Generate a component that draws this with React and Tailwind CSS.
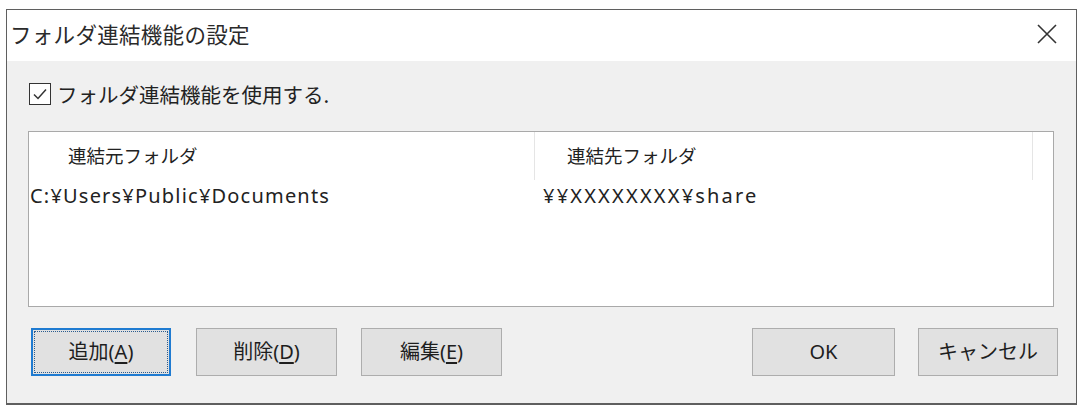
import React from "react";

const jp = { fontFamily: '"Noto Sans CJK JP", "Noto Sans", sans-serif' };
const mixed = { fontFamily: '"Noto Sans", "Noto Sans CJK JP", sans-serif' };

function Button({ label, mnemonic, focused, width }) {
  return (
    <div
      className={
        "relative flex h-[48px] items-center justify-center bg-[#e1e1e1] text-[20px] text-[#1e1e1e] " +
        (focused ? "border-2 border-[#1f7bd1]" : "border border-[#adadad]")
      }
      style={{ width, ...mixed }}
    >
      {focused && (
        <div className="pointer-events-none absolute inset-[1px] border border-dotted border-[#2a5c8f]" />
      )}
      <span>
        {label}(<span className="underline underline-offset-[3px]">{mnemonic}</span>)
      </span>
    </div>
  );
}

function PlainButton({ children, width }) {
  return (
    <div
      className="flex h-[48px] items-center justify-center border border-[#adadad] bg-[#e1e1e1] text-[20px] text-[#1e1e1e]"
      style={{ width, ...mixed }}
    >
      {children}
    </div>
  );
}

export default function App() {
  return (
    <div className="h-[407px] w-[1079px] bg-white pl-[6px] pt-[9px]" style={jp}>
      <div className="flex h-[396px] w-[1071px] flex-col border border-b-2 border-[#5f5f5f]">
        {/* title bar */}
        <div className="flex h-[51px] items-center justify-between bg-white pl-[3px] pr-[19px]">
          <span className="-mt-[3px] text-[21.5px] tracking-[0.3px] text-[#2a2a2a]">フォルダ連結機能の設定</span>
          <svg width="20" height="20" viewBox="0 0 20 20" className="-mt-[3px] text-[#333]">
            <path d="M1 1 L19 19 M19 1 L1 19" stroke="currentColor" strokeWidth="1.6" fill="none" />
          </svg>
        </div>

        {/* body */}
        <div className="flex flex-1 flex-col bg-[#f0f0f0]">
          <div className="ml-[22px] mt-[22px] flex h-[22px] items-center">
            <div className="flex h-[22px] w-[22px] items-center justify-center border border-[#333] bg-white">
              <svg width="16" height="14" viewBox="0 0 16 14">
                <path d="M2 7.5 L6 11.5 L14 2.5" stroke="#333" strokeWidth="1.5" fill="none" />
              </svg>
            </div>
            <span className="ml-[6px] text-[20.5px] text-[#222]">フォルダ連結機能を使用する.</span>
          </div>

          {/* list view */}
          <div className="ml-[21px] mt-[26px] h-[176px] w-[1026px] border border-[#a9a9a9] bg-white">
            <div className="flex h-[48px] items-center text-[18.5px] text-[#222]">
              <div className="flex h-full w-[506px] items-center border-r border-[#e5e5e5] pl-[39px]">
                連結元フォルダ
              </div>
              <div className="flex h-full w-[498px] items-center border-r border-[#e5e5e5] pl-[32px]">
                連結先フォルダ
              </div>
            </div>
            <div className="flex h-[32px] items-center text-[20px] text-[#222]" style={mixed}>
              <div className="w-[507px] pl-[1px] tracking-[1.2px]">C:¥Users¥Public¥Documents</div>
              <div className="pl-[7px] tracking-[2.2px]">¥¥XXXXXXXX¥share</div>
            </div>
          </div>

          {/* buttons */}
          <div className="ml-[24px] mt-[21px] flex items-center">
            <Button label="追加" mnemonic="A" focused width={140} />
            <div className="ml-[25px]">
              <Button label="削除" mnemonic="D" width={141} />
            </div>
            <div className="ml-[24px]">
              <Button label="編集" mnemonic="E" width={141} />
            </div>
            <div className="ml-[250px]">
              <PlainButton width={143}>OK</PlainButton>
            </div>
            <div className="ml-[23px]">
              <PlainButton width={140}>キャンセル</PlainButton>
            </div>
          </div>
        </div>
      </div>
    </div>
  );
}
